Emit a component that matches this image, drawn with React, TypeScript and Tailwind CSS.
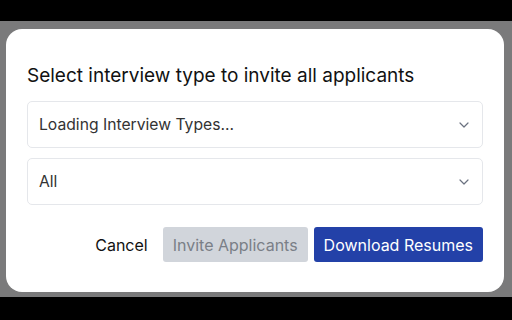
import React from "react";

function Chevron() {
  return (
    <svg width="10" height="6" viewBox="0 0 10 6" fill="none" className="shrink-0">
      <path d="M1 1l4 4 4-4" stroke="#6b7280" strokeWidth="1.2" strokeLinecap="round" strokeLinejoin="round" />
    </svg>
  );
}

function Select({ label }: { label: string }) {
  return (
    <div className="flex h-[47px] items-center justify-between rounded-[5px] border border-[#e5e7eb] pl-[11px] pr-[13px]">
      <span className="text-[15.7px] text-[#333333]">{label}</span>
      <Chevron />
    </div>
  );
}

export default function App() {
  return (
    <div
      className="flex h-[320px] w-[512px] flex-col bg-black"
      style={{ fontFamily: 'Inter, "Liberation Sans", Arial, sans-serif' }}
    >
      <div className="h-[21px] shrink-0" />
      <div className="flex h-[276px] shrink-0 flex-col bg-[#7a7a7b] pl-[6px] pr-[8px] pt-[8px]">
        <div className="flex h-[263px] flex-col rounded-[16px] bg-white pl-[21px] pr-[21px] pt-[35px]">
          <h1 className="text-[19px] leading-[24px] text-[#111111]">
            Select interview type to invite all applicants
          </h1>
          <div className="mt-[13px] flex flex-col gap-[10px]">
            <Select label="Loading Interview Types..." />
            <Select label="All" />
          </div>
          <div className="mt-[22px] flex items-center justify-end">
            <button className="h-[35px] px-[15px] text-[16px] text-[#111111]">Cancel</button>
            <button className="h-[35px] rounded-[3px] bg-[#d1d5db] px-[10px] text-[16px] text-[#7a7f87]">
              Invite Applicants
            </button>
            <button className="ml-[6px] h-[35px] rounded-[3px] bg-[#2341a8] px-[10px] text-[16px] text-white">
              Download Resumes
            </button>
          </div>
        </div>
      </div>
    </div>
  );
}
